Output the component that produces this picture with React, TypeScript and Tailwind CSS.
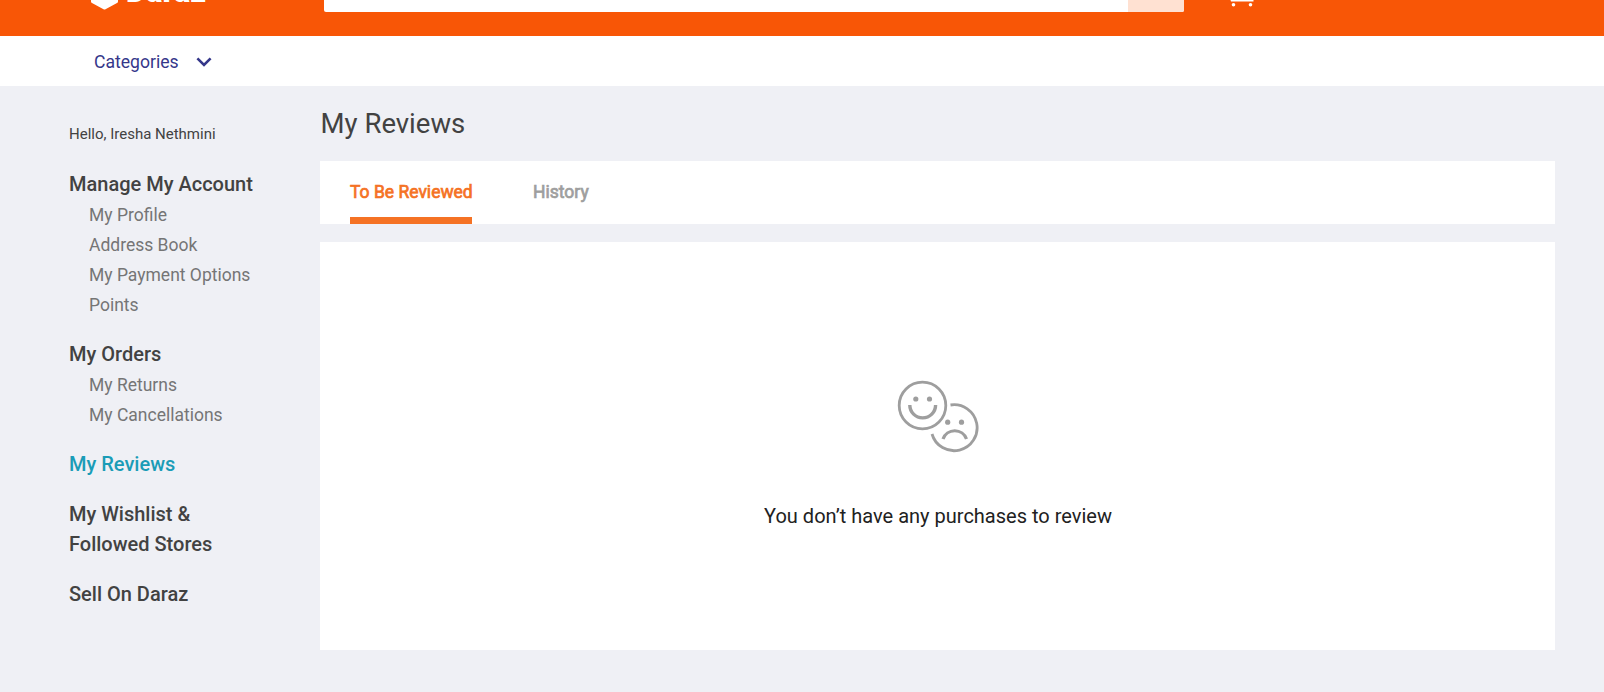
import React from "react";

type Section = { title: string; items?: string[]; active?: boolean };

const sections: Section[] = [
  {
    title: "Manage My Account",
    items: ["My Profile", "Address Book", "My Payment Options", "Points"],
  },
  { title: "My Orders", items: ["My Returns", "My Cancellations"] },
  { title: "My Reviews", active: true },
  { title: "My Wishlist & Followed Stores" },
  { title: "Sell On Daraz" },
];

function TopBar() {
  return (
    <header className="flex h-9 items-start overflow-hidden bg-[#f85606]">
      <div className="ml-[91px] flex h-9 w-[233px] shrink-0 items-start gap-[8px]">
        <svg width="27" height="36" viewBox="0 0 27 36" fill="#fff">
          <path d="M0 0H27V1.5Q27 2.5 26 3L14.5 9.2Q13.5 9.8 12.5 9.2L1 3Q0 2.5 0 1.5Z" />
        </svg>
        <span className="-mt-[26px] text-[31px] leading-[36px] font-black text-white">Daraz</span>
      </div>
      <div className="flex h-3 w-[860px] shrink-0 overflow-hidden rounded-b-[2px] bg-white">
        <div className="ml-auto h-3 w-14 bg-[#ffe1d2]" />
      </div>
      <svg className="ml-[46px]" width="24" height="10" viewBox="0 0 24 10" fill="#fff">
        <path d="M0.5 0H23.5V1.4H1Z" />
        <circle cx="3.5" cy="4.8" r="1.8" />
        <circle cx="20.5" cy="4.8" r="1.8" />
      </svg>
    </header>
  );
}

function Sidebar() {
  return (
    <aside className="w-[251px] shrink-0 pt-[38px]">
      <p className="text-[15px] leading-5 text-[#424242]">Hello, Iresha Nethmini</p>
      <nav className="mt-[25px] flex flex-col gap-5">
        {sections.map((s) => (
          <div key={s.title}>
            <h3
              className={
                s.active
                  ? "w-[190px] text-[20px] leading-[30px] font-medium text-[#1a9cb7]"
                  : "w-[190px] text-[20px] leading-[30px] font-medium text-[#424242]"
              }
            >
              {s.title}
            </h3>
            {s.items && (
              <ul className="-mb-px pt-px pl-5 text-[17.5px] leading-[30px] text-[#757575]">
                {s.items.map((i) => (
                  <li key={i}>{i}</li>
                ))}
              </ul>
            )}
          </div>
        ))}
      </nav>
    </aside>
  );
}

function Faces() {
  return (
    <svg width="84" height="74" viewBox="0 0 84 74" fill="none" stroke="#9e9e9e" strokeWidth="2.8">
      <circle cx="26.5" cy="26.5" r="23.3" />
      <path d="M13.8 26a12.9 12.9 0 0 0 25.8 0" strokeWidth="3.4" />
      <path d="M54.5 26A23 23 0 1 1 36 55" />
      <path d="M47 60a12.5 12.5 0 0 1 23.5 0" strokeWidth="3.2" />
      <g fill="#9e9e9e" stroke="none">
        <circle cx="19.8" cy="20" r="2.6" />
        <circle cx="33.5" cy="20" r="2.6" />
        <circle cx="51.7" cy="43.2" r="2.6" />
        <circle cx="65.5" cy="43.2" r="2.6" />
      </g>
    </svg>
  );
}

export default function App() {
  return (
    <div className="h-[692px] overflow-hidden bg-[#eff0f5] font-[Roboto,sans-serif]">
      <TopBar />
      <div className="flex h-[50px] items-center gap-[17px] bg-white pt-[2px] pl-[94px] text-[17.6px] text-[#35378a]">
        <span>Categories</span>
        <svg width="16" height="10" viewBox="0 0 16 10" fill="none" stroke="#35378a" strokeWidth="2.6">
          <path d="M1.4 1.3L8 7.9L14.6 1.3" />
        </svg>
      </div>
      <div className="flex pl-[69px]">
        <Sidebar />
        <main className="w-[1235px] shrink-0">
          <h1 className="pt-[18px] pl-[0.6px] text-[27.5px] leading-[40px] text-[#424242]">My Reviews</h1>
          <div className="mt-[17px] flex h-[63px] gap-[61px] bg-white pl-[30px] text-[17.5px]">
            <div className="w-[122px] border-b-[7px] border-[#f57224] leading-[63px] whitespace-nowrap text-[#f57224] [-webkit-text-stroke:0.7px_#f57224]">
              To Be Reviewed
            </div>
            <div className="leading-[63px] text-[#9e9e9e] [-webkit-text-stroke:0.7px_#9e9e9e]">History</div>
          </div>
          <section className="mt-[18px] flex h-[408px] flex-col items-center bg-white pt-[137px]">
            <Faces />
            <p className="mt-[48px] pl-px text-[20px] leading-[30px] text-[#212121]">
              You don’t have any purchases to review
            </p>
          </section>
        </main>
      </div>
    </div>
  );
}
